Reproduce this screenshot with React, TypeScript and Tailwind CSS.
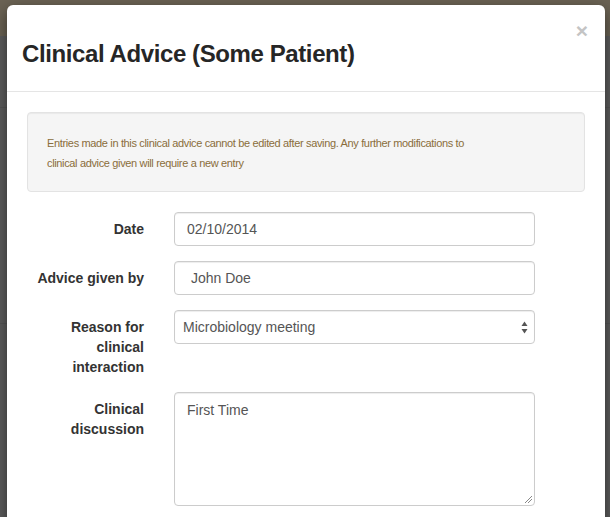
const rows = [
  { label: ["Date"], kind: "input", value: "02/10/2014" },
  { label: ["Advice given by"], kind: "input", value: " John Doe" },
  { label: ["Reason for", "clinical", "interaction"], kind: "select", value: "Microbiology meeting" },
  { label: ["Clinical", "discussion"], kind: "textarea", value: "First Time" },
];

const App = () => {
  return (
    <div
      className="relative h-[517px] w-[610px] overflow-hidden bg-[#5d5d5d]"
      style={{ fontFamily: '"Liberation Sans", Arial, sans-serif' }}
    >
      {/* backdrop page */}
      <div className="h-[36px] bg-[#6b6354]" />
      <div className="h-[72px] border-b border-[#555]" />
      <div className="h-[216px] border-b border-[#555]" />

      {/* Modal */}
      <div className="absolute left-[7px] top-[5px] w-[598px] rounded-[6px] bg-white shadow-[0_5px_15px_rgba(0,0,0,0.5)]">
        <div className="relative h-[87px] border-b border-[#e5e5e5] px-[15px] pt-[36px]">
          <h3 className="text-[24px] font-semibold leading-[26px] tracking-[-0.4px] text-[#262626]">
            Clinical Advice (Some Patient)
          </h3>
          <button className="absolute right-[17px] top-[15px] text-[21px] font-bold leading-none text-[#c4c4c4]">
            ×
          </button>
        </div>

        <div className="p-5">
          <div className="rounded-[4px] border border-[#e3e3e3] bg-[#f5f5f5] px-[19px] pb-[18px] pt-[20px] text-[11px] leading-[20px] tracking-[-0.35px] text-[#8a6d3b] shadow-[inset_0_1px_1px_rgba(0,0,0,0.05)]">
            Entries made in this clinical advice cannot be edited after saving. Any further modifications to
            <br />
            clinical advice given will require a new entry
          </div>

          <div className="mt-5 flex flex-col gap-[15px]">
            {rows.map((row) => (
              <div key={row.label.join(" ")} className="flex gap-[30px]">
                <label className="w-[117px] shrink-0 pt-[7px] text-right text-[14px] font-bold leading-[20px] text-[#333]">
                  {row.label.map((line) => (
                    <div key={line}>{line}</div>
                  ))}
                </label>
                {row.kind === "input" && (
                  <div className="flex h-[34px] w-[361px] items-center whitespace-pre rounded-[4px] border border-[#ccc] px-3 text-[14px] text-[#555] shadow-[inset_0_1px_1px_rgba(0,0,0,0.075)]">
                    {row.value}
                  </div>
                )}
                {row.kind === "select" && (
                  <div className="flex h-[34px] w-[361px] items-center justify-between rounded-[4px] border border-[#ccc] pl-2 pr-[6px] text-[14px] text-[#555] shadow-[inset_0_1px_1px_rgba(0,0,0,0.075)]">
                    <span>{row.value}</span>
                    <svg width="7" height="13" viewBox="0 0 7 13">
                      <path d="M3.5 0.5 L6.5 5 L0.5 5 Z" fill="#555" />
                      <path d="M0.5 8 L6.5 8 L3.5 12.5 Z" fill="#555" />
                    </svg>
                  </div>
                )}
                {row.kind === "textarea" && (
                  <div className="relative h-[114px] w-[361px] rounded-[4px] border border-[#ccc] px-3 pt-[7px] text-[14px] leading-[20px] text-[#555] shadow-[inset_0_1px_1px_rgba(0,0,0,0.075)]">
                    {row.value}
                    <svg className="absolute bottom-[2px] right-[2px]" width="8" height="8" viewBox="0 0 8 8">
                      <path d="M1 8 L8 1 M4 8 L8 4" stroke="#888" strokeWidth="1" />
                    </svg>
                  </div>
                )}
              </div>
            ))}
          </div>
        </div>
      </div>
    </div>
  );
};

export default App;
